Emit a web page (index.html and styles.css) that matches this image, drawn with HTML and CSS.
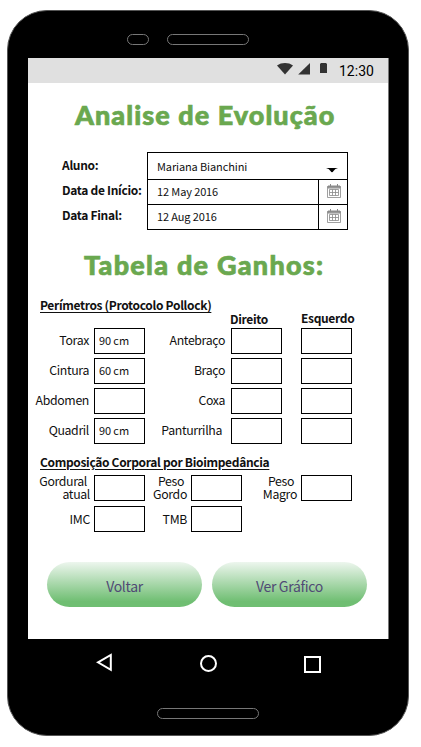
FILE: index.html
```html
<!DOCTYPE html>
<html lang="pt-BR">
<head>
<meta charset="utf-8">
<title>Analise de Evolução</title>
<link rel="stylesheet" href="styles.css">
</head>
<body>
<div class="phone">
  <div class="speaker"><span class="sensor"></span><span class="earpiece"></span></div>
  <main class="screen">
    <div class="status">
      <svg class="signals" width="52" height="14" viewBox="0 0 52 14">
        <path d="M0 3.5C4.500 .2 11.500 .2 16 3.500L8 12.500Z"/>
        <path d="M33 1V12.500H21.200Z"/>
        <path d="M43 1.500H44V1H49V1.500H50V11H43Z"/>
      </svg>
      <span class="clock">12:30</span>
    </div>
    <h1 class="title title-main">Analise de Evolução</h1>
    <section class="filters">
      <div class="filter-labels"><span>Aluno:</span><span>Data de Início:</span><span>Data Final:</span></div>
      <div class="fields">
        <div class="field select"><span class="value v-name">Mariana Bianchini</span><svg class="caret" width="12" height="5" viewBox="0 0 12 5"><path d="M0 0H12Q9 .5 7.500 3Q6 5.500 4.500 3Q3 .5 0 0Z"/></svg></div>
        <div class="field"><span class="value">12 May 2016</span><span class="calendar"><svg width="14" height="14" viewBox="0 0 14 14"><path class="cal-head" d="M1 2H13V4H1ZM3.500 0V3M10.500 0V3"/><path class="cal-grid" d="M.5 2.500H13.500V13.500H.5ZM2.500 5.500H11.500V11.500H2.500ZM2.500 8.500H11.500M5.500 5.500V11.500M8.500 5.500V11.500"/></svg></span></div>
        <div class="field"><span class="value">12 Aug 2016</span><span class="calendar"><svg width="14" height="14" viewBox="0 0 14 14"><path class="cal-head" d="M1 2H13V4H1ZM3.500 0V3M10.500 0V3"/><path class="cal-grid" d="M.5 2.500H13.500V13.500H.5ZM2.500 5.500H11.500V11.500H2.500ZM2.500 8.500H11.500M5.500 5.500V11.500M8.500 5.500V11.500"/></svg></span></div>
      </div>
    </section>
    <h2 class="title title-table">Tabela de Ganhos:</h2>
    <section class="perimeters">
      <h3 class="heading">Perímetros (Protocolo Pollock)</h3>
      <div class="sides"><span class="right-side">Direito</span><span class="left-side">Esquerdo</span></div>
      <div class="grid">
        <span class="label">Torax</span><span class="box">90 cm</span><span class="label">Antebraço</span><span class="box"></span><span class="box last"></span>
        <span class="label">Cintura</span><span class="box">60 cm</span><span class="label">Braço</span><span class="box"></span><span class="box last"></span>
        <span class="label">Abdomen</span><span class="box"></span><span class="label">Coxa</span><span class="box"></span><span class="box last"></span>
        <span class="label">Quadril</span><span class="box">90 cm</span><span class="label panturrilha">Panturrilha</span><span class="box"></span><span class="box last"></span>
      </div>
    </section>
    <section class="composition">
      <h3 class="heading">Composição Corporal por Bioimpedância</h3>
      <div class="body-grid">
        <span class="label two"><span class="shift">Gordural</span><br>atual</span><span class="box"></span><span class="label two"><span class="shift">Peso</span><br>Gordo</span><span class="box"></span><span class="label two"><span class="shift">Peso</span><br>Magro</span><span class="box"></span>
        <span class="label">IMC</span><span class="box"></span><span class="label">TMB</span><span class="box"></span>
      </div>
    </section>
    <div class="actions"><button class="action">Voltar</button><button class="action">Ver Gráfico</button></div>
  </main>
  <nav class="nav">
    <svg width="17" height="19" viewBox="0 0 17 19"><path d="M2 9.300L14.800 2V16.800Z"/></svg>
    <svg width="17" height="17" viewBox="0 0 17 17"><circle cx="8.500" cy="8.500" r="7.500"/></svg>
    <svg width="17" height="17" viewBox="0 0 17 17"><rect x="1" y="1" width="15" height="15"/></svg>
  </nav>
  <div class="chin"></div>
</div>
</body>
</html>
```
FILE: styles.css
```css
* { box-sizing: border-box; }
body {
  margin: 0;
  padding: 10px 0 0 7px;
  background: #fff;
  font-family: "Noto Sans CJK SC", "Noto Sans", sans-serif;
  font-size: 12.3px;
  line-height: 16px;
  color: #111;
}
h1, h2, h3 { margin: 0; }
svg { display: block; }
.phone {
  width: 402px;
  height: 726px;
  border: 1px solid #555;
  border-radius: 40px;
  background: #000;
  padding: 23px 19px 0 20px;
}
.speaker { display: flex; gap: 18px; height: 24px; padding-left: 99px; }
.sensor, .earpiece, .chin { height: 11px; border: 1px solid #777; border-radius: 6px; }
.sensor { width: 22px; }
.earpiece { width: 82px; }
.screen { width: 361px; height: 581px; background: #fff; overflow: hidden; border-right: 1px solid #777; }
.status { height: 25px; background: #e0e0e0; display: flex; padding: 4px 0 0 249px; }
.signals { fill: #333; }
.clock { font: 14px/19px Roboto, sans-serif; color: #000; margin-left: 10px; }
.title { font-family: Lato, sans-serif; font-weight: 900; font-size: 27px; line-height: 34px; color: #6aa84f; white-space: nowrap; -webkit-text-stroke: 0.7px #6aa84f; }
.title-main { margin-top: 15px; padding-left: 47px; letter-spacing: 1.05px; }
.filters { display: flex; align-items: flex-start; height: 78px; margin-top: 20px; padding-left: 34px; }
.filter-labels { width: 85px; display: grid; grid-auto-rows: 25px; padding-top: 5px; font-size: 12px; font-weight: 700; letter-spacing: -0.3px; white-space: nowrap; }
.fields { width: 201px; border: 1px solid #000; }
.field { height: 25px; display: flex; justify-content: space-between; align-items: center; }
.field + .field { border-top: 1px solid #000; }
.select { height: 26px; padding-right: 9px; }
.value { font-size: 11px; padding: 0 0 2px 9px; letter-spacing: -0.12px; white-space: nowrap; }
.v-name { padding-bottom: 0; }
.caret { margin-top: 8px; fill: #000; }
.calendar { width: 29px; height: 100%; border-left: 1px solid #000; padding: 4px 0 0 8px; }
.cal-head { fill: #aaa; stroke: #888; }
.cal-grid { fill: none; stroke: #888; stroke-width: .8; }
.title-table { margin-top: 18px; padding-left: 56px; letter-spacing: 1.25px; }
.heading { font-size: 12px; line-height: 16px; font-weight: 700; letter-spacing: -0.33px; text-decoration: underline; text-underline-offset: 2px; padding-left: 12px; white-space: nowrap; }
.perimeters { padding-top: 15px; }
.sides { display: grid; grid-template-columns: 71px 60px; padding-left: 202px; height: 15px; font-size: 12px; font-weight: 700; letter-spacing: -0.33px; }
.left-side { margin-top: -3px; }
.right-side { margin-top: -2px; }
.grid { display: grid; grid-template-columns: 61px 51px 76px 51px 51px; column-gap: 5px; row-gap: 4px; grid-auto-rows: 26px; }
.last { margin-left: 14px; }
.box { width: 51px; height: 26px; border: 1px solid #000; padding: 3px 0 0 4px; font-size: 11px; letter-spacing: -0.1px; }
.label { text-align: right; padding-top: 4px; white-space: nowrap; letter-spacing: -0.35px; }
.grid .label:nth-child(5n+3) { padding-right: 1px; }
.grid .panturrilha:nth-child(5n+3) { padding-right: 4px; }
.composition { padding-top: 10px; }
.body-grid { display: grid; grid-template-columns: 62px 51px 38px 51px 51px 51px; column-gap: 4px; row-gap: 5px; grid-auto-rows: 26px; padding-top: 5px; }
.body-grid .label { padding-top: 5px; }
.body-grid .two { line-height: 13px; padding-top: 0; }
.shift { padding-right: 3px; }
.actions { display: flex; gap: 10px; padding: 30px 0 0 19px; }
.action { width: 155px; height: 45px; border: 0; border-radius: 22.5px; padding: 2px 0 0; background: linear-gradient(#edf6ee, #6fbe72 88%); font: 14px/20px "Noto Sans CJK SC", sans-serif; letter-spacing: -0.3px; color: #504a75; }
.nav { display: flex; gap: 87px; padding: 14px 0 0 68px; height: 69px; align-items: flex-start; }
.nav svg { fill: none; stroke: #fff; stroke-width: 2; margin-top: 2px; }
.nav svg:first-child { margin-top: 0; }
.nav svg:last-child { margin-top: 3px; }
.chin { width: 102px; margin-left: 129px; }
```
